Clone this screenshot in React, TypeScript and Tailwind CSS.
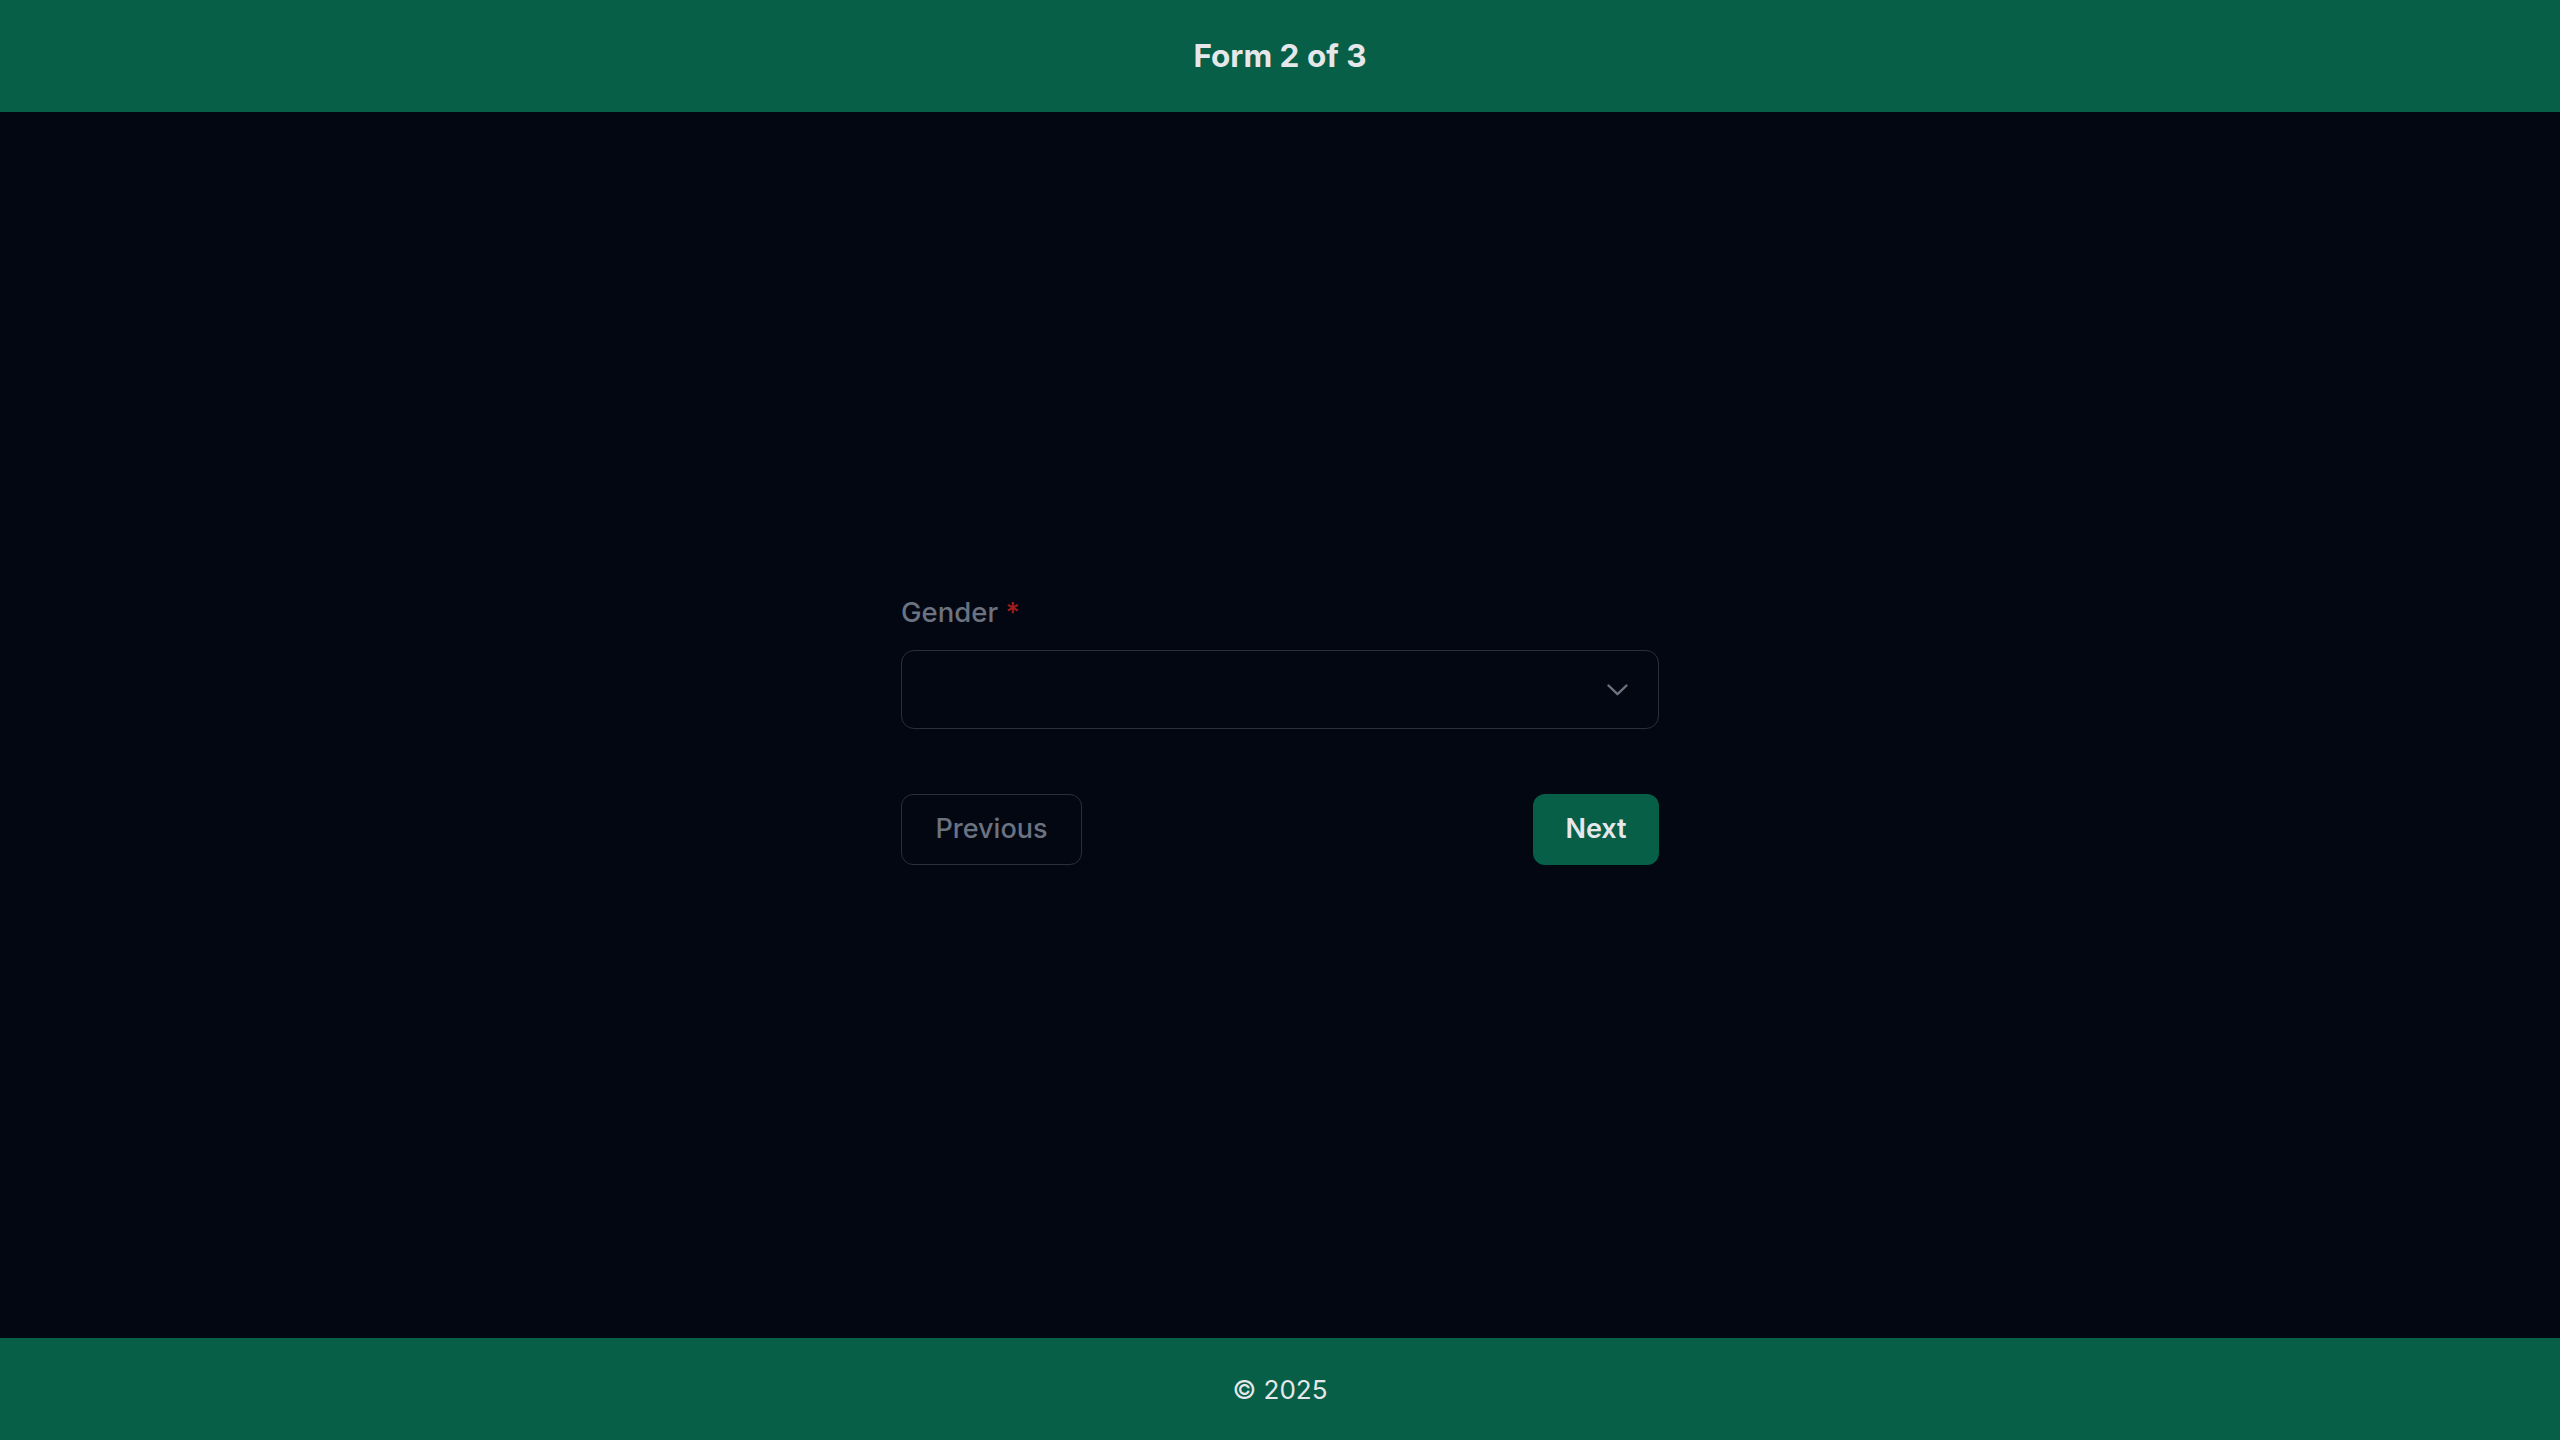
import { useState } from "react";

function App() {
  const [gender, setGender] = useState("");

  const handleGenderChange = (event: React.ChangeEvent<HTMLSelectElement>) => {
    setGender(event.target.value);
  };

  return (
    <div className="flex flex-col min-h-screen bg-[#030712] font-['Inter',_'Liberation_Sans',_sans-serif]">
      <header className="flex items-center justify-center h-[112px] bg-[#065f46]">
        <h1 className="text-[31.5px] font-bold text-[#e5e7eb]">Form 2 of 3</h1>
      </header>

      <main className="flex flex-1 items-center justify-center">
        <form className="flex flex-col w-[758px] mt-[6px]" onSubmit={(e) => e.preventDefault()}>
          <label htmlFor="gender-select" className="text-[27.5px] leading-[42px] font-medium text-[#6b7280]">
            Gender <span className="text-[#a11d1d]">*</span>
          </label>
          <div className="relative mt-[17px]">
            <select
              id="gender-select"
              value={gender}
              onChange={handleGenderChange}
              className="w-full h-[79px] px-6 appearance-none bg-transparent border border-[#29303b] rounded-[13px] text-[27px] text-[#e5e7eb] outline-none"
            >
              <option value=""></option>
              <option value="male">Male</option>
              <option value="female">Female</option>
              <option value="other">Other</option>
            </select>
            <svg
              className="absolute right-[31px] top-[34px] pointer-events-none"
              width="21"
              height="12"
              viewBox="0 0 21 12"
              fill="none"
            >
              <polyline
                points="1.5,1.5 10.5,10.2 19.5,1.5"
                stroke="#6b7280"
                strokeWidth="2.4"
                strokeLinecap="round"
                strokeLinejoin="round"
              />
            </svg>
          </div>
          <div className="flex justify-between mt-[65px]">
            <button
              type="button"
              className="h-[71px] w-[181px] border border-[#29303b] rounded-[12px] text-[27px] font-medium text-[#6b7280]"
            >
              Previous
            </button>
            <button
              type="submit"
              className="h-[71px] w-[126px] bg-[#065f46] rounded-[12px] text-[27px] font-semibold text-[#e5e7eb]"
            >
              Next
            </button>
          </div>
        </form>
      </main>

      <footer className="flex items-center justify-center h-[102px] bg-[#065f46]">
        <p className="text-[26px] text-[#e5e7eb]">© 2025</p>
      </footer>
    </div>
  );
}

export default App;
